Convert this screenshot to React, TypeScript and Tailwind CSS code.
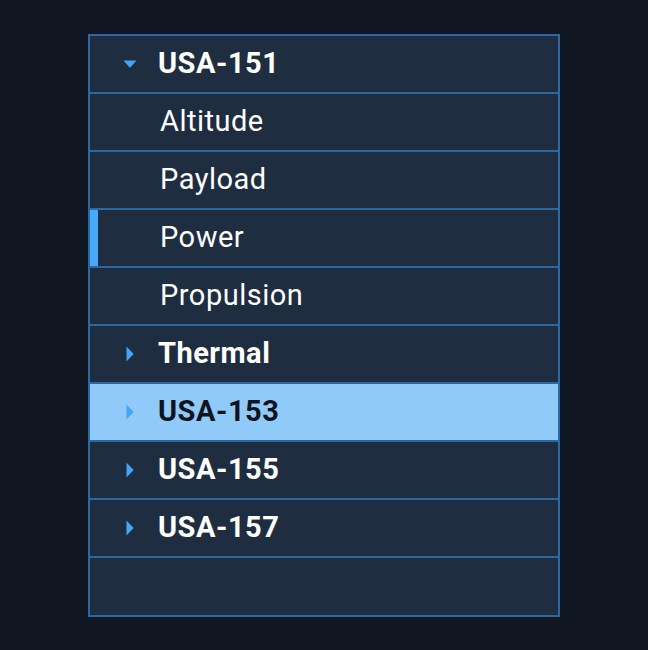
import React from "react";

type Row = { label: string; kind: "parent" | "child" | "empty"; open?: boolean; selected?: boolean; active?: boolean };

const rows: Row[] = [
  { label: "USA-151", kind: "parent", open: true },
  { label: "Altitude", kind: "child" },
  { label: "Payload", kind: "child" },
  { label: "Power", kind: "child", active: true },
  { label: "Propulsion", kind: "child" },
  { label: "Thermal", kind: "parent" },
  { label: "USA-153", kind: "parent", selected: true },
  { label: "USA-155", kind: "parent" },
  { label: "USA-157", kind: "parent" },
  { label: "", kind: "empty" },
];

function Caret({ open }: { open?: boolean }) {
  return open ? (
    <svg width="14" height="8" viewBox="0 0 14 8" className="block">
      <path d="M0.5 0.5 H13.5 L7.6 7.2 Q7 7.8 6.4 7.2 Z" fill="#42a5f5" />
    </svg>
  ) : (
    <svg width="8" height="16" viewBox="0 0 8 16" className="block">
      <path d="M0.5 0.5 V15.5 L7.2 8.6 Q7.8 8 7.2 7.4 Z" fill="#42a5f5" />
    </svg>
  );
}

export default function App() {
  return (
    <div className="w-[648px] h-[650px] bg-[#111824] pt-[34px] pl-[88px]" style={{ fontFamily: "Roboto, 'Noto Sans', sans-serif" }}>
      <div className="w-[472px] border-2 border-[#2d68a3] flex flex-col">
        {rows.map((r, i) => (
          <div
            key={i}
            className={`relative ${i < rows.length - 1 ? "h-[58px] border-b-2" : "h-[57px]"} flex items-center border-[#2d68a3] ${r.selected ? "bg-[#90caf9]" : "bg-[#1e2d40]"}`}
          >
            {r.active && <div className="absolute left-0 top-0 bottom-0 w-[8px] bg-[#48a9fb]" />}
            {r.kind === "parent" && (
              <>
                <div className="w-[68px] flex">
                  <div className={r.open ? "ml-[33px]" : "ml-[36px]"}>
                    <Caret open={r.open} />
                  </div>
                </div>
                <span className={`text-[29px] leading-none font-bold tracking-[0.5px] mb-[2px] ${r.selected ? "text-[#0f141c]" : "text-white"}`}>{r.label}</span>
              </>
            )}
            {r.kind === "child" && <span className="pl-[70px] text-[29px] leading-none text-white tracking-[0.5px] mb-[2px]">{r.label}</span>}
          </div>
        ))}
      </div>
    </div>
  );
}
